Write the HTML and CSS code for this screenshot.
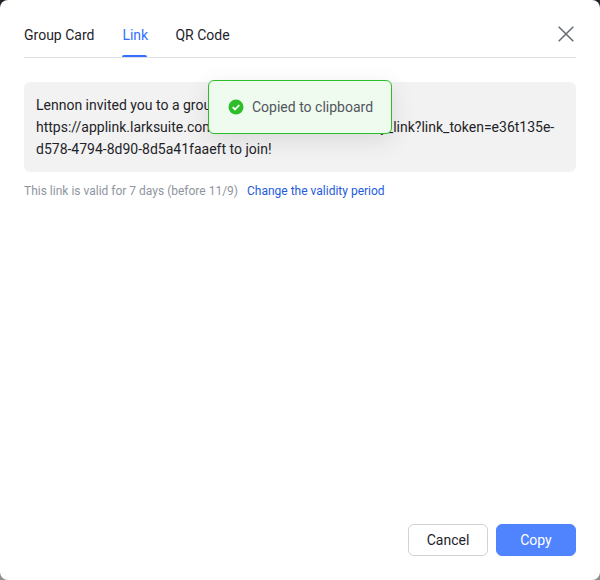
FILE: index.html
```html
<!DOCTYPE html>
<html lang="en">
  <head>
    <title>Share group</title>
    <meta charset="utf-8">
    <link rel="stylesheet" href="styles.css">
  </head>
  <body>

  <div class="modal">

    <div class="header">
      <div class="tabs">
        <span class="tab">Group Card</span>
        <span class="tab active">Link</span>
        <span class="tab">QR Code</span>
      </div>
      <svg class="close" width="16" height="16" viewBox="0 0 16 16" aria-hidden="true">
        <path d="M.7.7l14.6 14.6M15.3.7L.7 15.3" fill="none" stroke="#646a73" stroke-width="1.5"/>
      </svg>
    </div>

    <div class="content">
      <div class="message">
        Lennon invited you to a group chat. Open the link<br>
        https://applink.larksuite.com/client/chat/chatter/add_by_link?link_token=e36t135e-<br>
        d578-4794-8d90-8d5a41faaeft to join!
      </div>
      <div class="validity">
        <span>This link is valid for 7 days (before 11/9)</span>
        <a class="change" href="#">Change the validity period</a>
      </div>
    </div>

    <div class="footer">
      <button class="btn">Cancel</button>
      <button class="btn primary">Copy</button>
    </div>

  </div>

  <div class="toast">
    <svg width="16" height="16" viewBox="0 0 16 16" aria-hidden="true">
      <circle cx="8" cy="8" r="7.5" fill="#2ebd2b"/>
      <path d="M4.7 8.2l2.3 2.3 4.3-4.5" fill="none" stroke="#fff" stroke-width="1.8"/>
    </svg>
    <span>Copied to clipboard</span>
  </div>

  </body>
</html>
```

FILE: styles.css
```css
html {
  height: 100%;
}
body {
  margin: 0;
  height: 100%;
  background: linear-gradient(#20232b, #20232b 12%, #8f8f8f 88%, #8f8f8f);
  color: #1f2329;
  font-family: Roboto, sans-serif;
  font-size: 14px;
  line-height: 22px;
  overflow: hidden;
}

.modal {
  height: 100%;
  box-sizing: border-box;
  padding: 0 24px 24px;
  background: #fff;
  border-radius: 8px;
  display: flex;
  flex-direction: column;
}

.header {
  height: 58px;
  flex: none;
  box-sizing: border-box;
  border-bottom: 1px solid #dee0e3;
  display: flex;
  justify-content: space-between;
}

.tabs {
  display: flex;
  gap: 28px;
}

.tab {
  height: 57px;
  box-sizing: border-box;
  padding-top: 24px;
  display: flex;
  flex-direction: column;
  justify-content: space-between;
}

.tab.active {
  width: 25px;
  color: #3370ff;
}

.tab.active::after {
  content: "";
  height: 2px;
  background: #3370ff;
  border-radius: 2px 2px 0 0;
}

.close {
  margin: 26px 2px 0 0;
}

.content {
  flex: 1;
  padding-top: 24px;
}

.message {
  padding: 12px;
  background: #f2f2f2;
  border-radius: 6px;
}

.validity {
  display: flex;
  gap: 9px;
  margin-top: 9px;
  font-size: 12px;
  line-height: 20px;
  color: #8f959e;
}

.change {
  color: #245bdb;
  text-decoration: none;
}

.footer {
  display: flex;
  justify-content: flex-end;
  gap: 8px;
}

.btn {
  width: 80px;
  height: 32px;
  padding: 0;
  font: inherit;
  color: #1f2329;
  background: #fff;
  border: 1px solid #d0d3d6;
  border-radius: 6px;
}

.primary {
  color: #fff;
  background: #5084ff;
  border-color: #5084ff;
}

/* sits over the message box */
.toast {
  position: absolute;
  left: 208px;
  top: 80px;
  width: 184px;
  height: 54px;
  box-sizing: border-box;
  padding-left: 19px;
  display: flex;
  align-items: center;
  gap: 8px;
  color: #51565d;
  background: #f0fbef;
  border: 1px solid #2ebd2b;
  border-radius: 6px;
  box-shadow: 0 6px 24px rgba(0,0,0,0.1);
}
```
